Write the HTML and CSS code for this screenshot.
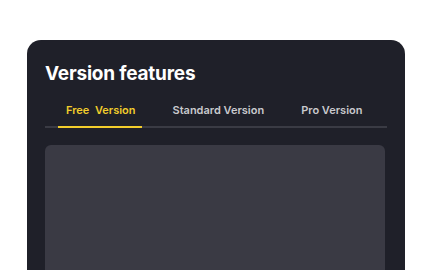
FILE: index.html
```html
<!DOCTYPE html>
<html>
<head>
<meta charset="utf-8">
<link rel="stylesheet" href="styles.css">
</head>
<body>
<div class="card">
  <h1 class="title">Version features</h1>
  <div class="tabs">
    <div class="tab active">Free&nbsp; Version</div>
    <div class="tab">Standard Version</div>
    <div class="tab">Pro Version</div>
  </div>
  <div class="panel"></div>
</div>
</body>
</html>
```
FILE: styles.css
```css
html, body {
  margin: 0;
  padding: 0;
  background: #ffffff;
  width: 432px;
  height: 270px;
  overflow: hidden;
  font-family: Inter, "Noto Sans", sans-serif;
}
body {
  padding: 40px 27px 0 27px;
  box-sizing: border-box;
}
.card {
  background: #1f2029;
  border-radius: 14px 14px 0 0;
  height: 230px;
  padding: 22px 20px 0 18px;
  box-sizing: border-box;
  overflow: hidden;
}
.title {
  margin: 0;
  font-size: 19px;
  font-weight: 700;
  color: #ffffff;
  line-height: 24px;
  letter-spacing: -0.2px;
}
.tabs {
  display: flex;
  margin-top: 15px;
  margin-right: -2px;
  padding: 0 21px;
  gap: 37px;
  height: 25px;
  border-bottom: 2px solid #3a3b44;
}
.tab {
  position: relative;
  flex-shrink: 0;
  white-space: nowrap;
  font-size: 11px;
  font-weight: 600;
  color: #c9c9cd;
  line-height: 14px;
  letter-spacing: 0;
  padding-top: 2px;
}
.tab.active {
  color: #f2cd2c;
}
.tab.active::after {
  content: "";
  position: absolute;
  left: -8px;
  right: -7px;
  bottom: -2px;
  height: 2px;
  background: #f2cd2c;
}
.panel {
  margin-top: 17px;
  height: 140px;
  background: #3a3a44;
  border-radius: 6px 6px 0 0;
}
```
